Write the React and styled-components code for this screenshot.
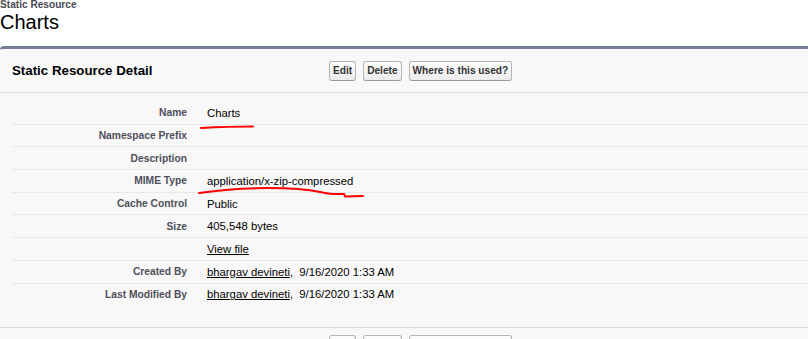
import React from "react";
import styled, { createGlobalStyle } from "styled-components";

const GlobalStyle = createGlobalStyle`
  body {
    margin: 0;
    background: #fff;
    font-family: "Liberation Sans", Arial, sans-serif;
    color: #000;
  }
`;

const fields = [
  { label: "Name", value: "Charts" },
  { label: "Namespace Prefix", value: "" },
  { label: "Description", value: "" },
  { label: "MIME Type", value: "application/x-zip-compressed" },
  { label: "Cache Control", value: "Public" },
  { label: "Size", value: "405,548 bytes" },
  { label: "", link: "View file" },
  { label: "Created By", link: "bhargav devineti", after: ",  9/16/2020 1:33 AM" },
  { label: "Last Modified By", link: "bhargav devineti", after: ",  9/16/2020 1:33 AM" },
];

const App = () => {
  return (
    <Page>
      <GlobalStyle />
      <PageHeader>
        <PageType>Static Resource</PageType>
        <PageTitle>Charts</PageTitle>
      </PageHeader>

      <Panel>
        <PanelHeader>
          <PanelTitle>Static Resource Detail</PanelTitle>
          <Buttons>
            <Button>Edit</Button>
            <Button>Delete</Button>
            <Button>Where is this used?</Button>
          </Buttons>
        </PanelHeader>

        <PanelBody>
          {fields.map((f, i) => (
            <Row key={i} $last={i === fields.length - 1}>
              <Label>{f.label}</Label>
              <Value>
                {f.value}
                {f.link && <Link>{f.link}</Link>}
                {f.after}
              </Value>
            </Row>
          ))}
        </PanelBody>

        <PanelFooter>
          <span />
          <Buttons>
            <Button>Edit</Button>
            <Button>Delete</Button>
            <Button>Where is this used?</Button>
          </Buttons>
        </PanelFooter>
      </Panel>

      {/* hand-drawn red marks over the values */}
      <Marks width="808" height="339" viewBox="0 0 808 339">
        <path d="M201,128 C220,127 240,126.5 253,126.5" />
        <path d="M199,193 C228,189 262,186.5 298,189 C312,190 324,193 333,194 L344,194 L345,196.5 L363,196" />
      </Marks>
    </Page>
  );
};

export default App;

const Page = styled.div`
  position: relative;
  width: 808px;
  height: 339px;
  overflow: hidden;
`;

const PageHeader = styled.div`
  height: 47px;
  margin-top: -1px;
`;

const PageType = styled.div`
  font-size: 10.15px;
  line-height: 12px;
  font-weight: bold;
  color: #4a4a56;
`;

const PageTitle = styled.h1`
  margin: 0;
  font-size: 20px;
  line-height: 22px;
  font-weight: normal;
  color: #000;
`;

const Panel = styled.div`
  background: #f8f8f8;
  border-top: 3px solid #747e96;
  border-radius: 4px 0 0 0;
`;

const PanelHeader = styled.div`
  display: grid;
  grid-template-columns: 317px 1fr;
  align-items: center;
  height: 43px;
  padding-left: 12px;
  border-bottom: 1px solid #dbdbdb;
`;

const PanelTitle = styled.h2`
  margin: 0;
  font-size: 13.3px;
  font-weight: bold;
  color: #000;
`;

const Buttons = styled.div`
  display: flex;
  gap: 7px;
`;

const Button = styled.button`
  height: 20px;
  padding: 0 3px;
  font-family: "Liberation Sans", Arial, sans-serif;
  font-size: 10.15px;
  font-weight: bold;
  color: #333;
  background: linear-gradient(#fdfdfd, #ececec);
  border: 1px solid #b5b5b5;
  border-bottom-color: #9a9a9a;
  border-radius: 3px;
  cursor: pointer;
`;

const PanelBody = styled.div`
  padding: 9px 0 21px 12px;
`;

const Row = styled.div`
  display: grid;
  grid-template-columns: 185px 1fr;
  align-items: center;
  box-sizing: border-box;
  height: 22.7px;
  border-bottom: 1px solid ${(p) => (p.$last ? "transparent" : "#e8e8e8")};
`;

const Label = styled.div`
  padding-right: 10px;
  text-align: right;
  font-size: 10.25px;
  font-weight: bold;
  color: #4f4f5a;
`;

const Value = styled.div`
  padding-left: 10px;
  font-size: 11.3px;
  color: #000;
  white-space: pre;
`;

const Link = styled.a`
  color: #000;
  text-decoration: underline;
  cursor: pointer;
`;

const PanelFooter = styled.div`
  display: grid;
  grid-template-columns: 317px 1fr;
  padding: 7px 0 8px 12px;
  border-top: 1px solid #dbdbdb;
`;

const Marks = styled.svg`
  position: absolute;
  top: 0;
  left: 0;
  pointer-events: none;

  path {
    fill: none;
    stroke: #f00;
    stroke-width: 2;
    stroke-linecap: round;
  }
`;
